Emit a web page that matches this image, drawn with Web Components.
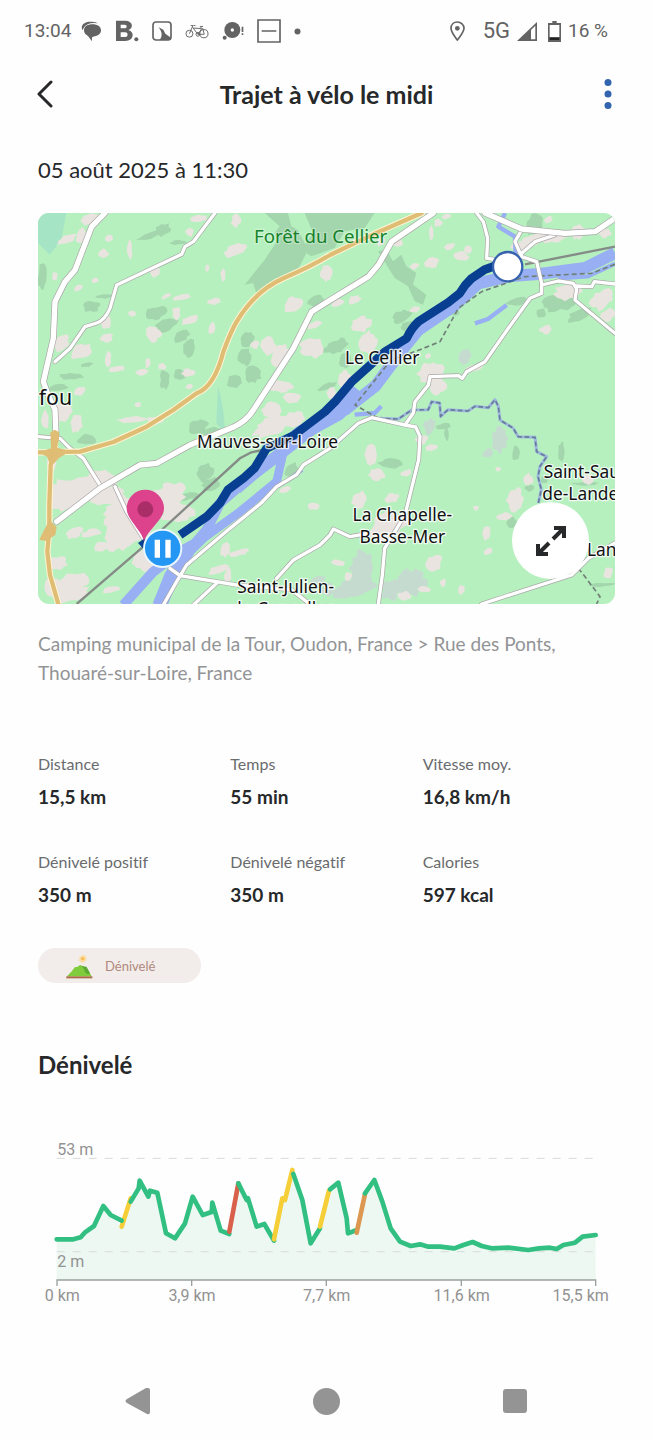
<!DOCTYPE html>
<html lang="fr">
<head>
<meta charset="utf-8">
<meta name="viewport" content="width=device-width, initial-scale=1">
<title>Trajet à vélo le midi</title>
<style>
body { margin: 0; background: #fefefe; color: #26282a; font-family: Lato, "Open Sans", sans-serif; font-variant-ligatures: none; }
</style>
</head>
<body>
<trip-page></trip-page>

<template id="status-bar">
<style>
:host { display: flex; align-items: center; justify-content: space-between; height: 62px; padding: 0 45px 0 24px; color: #636363; font: 19px/24px Roboto, sans-serif; }
div { display: flex; align-items: center; }
svg { display: block; flex: none; }
.net { font-size: 22px; margin-left: 18px; margin-right: 7px; }
.bat { margin: 0 7px 0 11px; }
.icons { gap: 13px; margin-left: 10px; }
</style>
<div><span>13:04</span>
<div class="icons">
<svg width="21" height="22" viewBox="0 0 63 66" fill="#636363"><path d="M4 31C-3 12 14 4 32 5q14 0 18 5Q18 6 8 24z"/><path d="M9 31C9 19 20 13 34 13c16 0 26 7 26 18 0 10-8 16-19 18l-8 3v12L21 48C13 44 9 38 9 31z"/></svg>
<svg width="24" height="24" viewBox="0 0 72 72" fill="#636363"><path fill-rule="evenodd" d="M3 5h27c25 0 26 23 10 28 20 5 17 33-9 33H3zM17 17v11h12c8 0 8-11 0-11zM17 40v14h14c9 0 9-14 0-14z"/><circle cx="64" cy="61" r="6"/></svg>
<svg width="20" height="20" viewBox="0 0 60 60"><rect x="3" y="3" width="54" height="54" rx="9" fill="none" stroke="#636363" stroke-width="5"/><path d="M20 19l14 7 6 12 17 12v7H23c8-11 9-22-3-38z" fill="#636363"/></svg>
<svg width="24" height="17" viewBox="0 0 76 54" fill="none" stroke="#636363" stroke-width="3"><circle cx="14" cy="34" r="11"/><circle cx="60" cy="34" r="13"/><path d="M14 34l11-26h-7m9 0h6m-9 6l17 22 12-18-27-2m26 0l-4-5h9m-1 5l5 20M41 36h19"/><circle cx="41" cy="36" r="6"/></svg>
<svg width="22" height="20" viewBox="0 0 66 60" fill="#636363"><circle cx="31" cy="27" r="24"/><circle cx="31" cy="27" r="5" fill="#fff"/><circle cx="8" cy="50" r="6"/><path d="M59 17h5v16h-5zM59 37h5v5h-5z"/></svg>
<svg width="24" height="24" viewBox="0 0 72 72" fill="none" stroke="#636363" stroke-width="5"><path d="M3 3h66v66H3zM14 36h44"/></svg>
<svg width="7" height="7" viewBox="0 0 14 14" fill="#636363"><circle cx="7" cy="7" r="6"/></svg>
</div></div>
<div>
<svg width="15" height="20" viewBox="0 0 45 60" fill="none" stroke="#636363" stroke-width="5"><path d="M22 57C10 41 3 33 3 22 3 11 11 3 22 3s20 8 20 19c0 11-8 19-20 35z"/><circle cx="22" cy="22" r="7" fill="#636363" stroke="none"/></svg>
<span class="net">5G</span>
<svg width="20" height="19" viewBox="0 0 60 57"><path d="M0 57L60 0v57z" fill="#636363"/><path d="M42 24l13-13v41H42z" fill="#fefefe"/></svg>
<svg class="bat" width="13" height="21" viewBox="0 0 39 63"><path d="M13 0h13v6h13v57H0V6h13z" fill="#636363"/><path d="M5 12h29v36H5z" fill="#fefefe"/><path d="M5 50h29v7H5z" fill="#222"/></svg>
<span>16 %</span></div>
</template>

<template id="app-header">
<style>
:host { display: flex; align-items: center; justify-content: space-between; height: 64px; padding: 0 27px; }
h1 { margin: 0; font-size: 25px; line-height: 32px; font-weight: 700; }
button { width: 36px; height: 44px; padding: 0; border: 0; background: none; display: grid; place-items: center; }
svg { display: block; }
</style>
<button aria-label="Retour"><svg width="16" height="28" viewBox="0 0 16 28" fill="none" stroke="#26282a" stroke-width="3" stroke-linecap="round" stroke-linejoin="round"><path d="M14 2L2 14l12 12"/></svg></button>
<h1><slot></slot></h1>
<button aria-label="Plus d’options"><svg width="8" height="32" viewBox="0 0 16 64" fill="#3265ae"><circle cx="8" cy="9" r="7"/><circle cx="8" cy="32" r="7"/><circle cx="8" cy="55" r="7"/></svg></button>
</template>

<template id="trip-map">
<style>
:host { display: block; position: relative; border-radius: 11px; overflow: hidden; background: #b7f0bf; }
.map { display: block; width: 100%; height: auto; }
button { position: absolute; right: 26px; bottom: 25px; width: 77px; height: 77px; border: 0; border-radius: 50%; background: #fff; padding: 0; display: grid; place-items: center; }
text { font-family: "Noto Sans", "Open Sans", sans-serif; font-size: 52px; fill: #111; stroke: #fff; stroke-opacity: .8; stroke-width: 8; paint-order: stroke; stroke-linejoin: round; }
.fou { font-size: 64px; }
.wood { font-size: 56px; fill: #16822a; stroke-opacity: .3; }
.mid { text-anchor: middle; }
</style>
<svg class="map" viewBox="0 0 1731 1173" role="img" aria-label="Carte du trajet">
<defs>
<g id="roads" fill="none" stroke-linejoin="round" stroke-linecap="round">
<path d="M201 0L161 41 111 171 81 206 51 266 46 376 16 506 30 545 51 590 54 666"/>
<path d="M1186 0L1061 86 1021 156 991 191 861 271 821 296 766 406 646 591Q625 625 585 643L456 696 356 751 306 756 186 826 56 926"/>
<path d="M1341 0L1451 48 1581 61 1671 56 1731 16"/>
</g>
<g id="lanes" fill="none" stroke-linejoin="round" stroke-linecap="round">
<path d="M531 0L466 86 441 101 431 124 236 216 216 286Q200 322 176 330L141 341 96 406 51 446"/>
<path d="M0 671L66 676 96 706 136 736 186 816M231 821L266 896 316 976"/>
<path d="M1316 0L1336 26 1349 76 1346 136 1381 141M1451 121L1491 86 1551 66"/>
<path d="M1451 51L1431 86 1451 131 1496 146 1511 211 1511 241 1476 256 1411 346 1341 446 1286 476 1273 496 1261 488 1176 491 1171 516 1131 566 1126 600 1101 636 1133 642 1146 670 1142 740 1101 906 1040 1006 1033 1086 1021 1173"/>
<path d="M1511 216L1561 204 1606 211 1616 228 1611 261 1731 361M1616 219L1661 221 1669 206 1731 213"/>
<path d="M1101 636L1001 614 961 631 876 706 796 756 776 785 716 821 670 870 576 946 446 1056 416 1106 376 1176"/>
<path d="M396 1066L426 1088 596 1116 760 1130 815 1173M466 1176L536 1111M716 1096L766 1041 846 996 876 966 886 948 936 971 991 961M1331 1173L1601 1086 1651 1036 1731 990"/>
</g>
<g id="motorway" fill="none" stroke-linejoin="round" stroke-linecap="round">
<path d="M1151 0L1010 62 876 126Q820 160 736 196 650 235 596 326 580 352 556 416 530 520 476 541L406 591 326 641 226 687 126 716 0 718M51 666V716L38 756 34 876 34 946 28 1016 36 1086 61 1173"/>
</g>
</defs>
<path d="M0 0H85L70 80 35 125 0 90zM540 520q22 80 20 140l-25-30z" fill="#a5e5c5"/>
<g class="woods" fill="#a3d6ad"></g>
<g class="haze" fill="#c6dbd0"></g>
<g class="towns" fill="#e9e4df"></g>
<path d="M680 0h70l10 40 20 10 30 60-40 80-55 5-60 45-10-30-25 5 60-75 40-60-10-20 15-20zM800 0h210l-30 45-60 10-30 50-70 25-30-20 35-50z" fill="#a3d6ad"/>
<path d="M1020 115l25-5 20 35 25-20 15 35 30 20-10 35 40 30-10 30-25-10-20-45-40-25z" fill="#a3d6ad"/>
<g fill="none" stroke="#98b0f3" stroke-linejoin="round">
<path d="M1731 120L1641 165 1511 182 1411 190 1321 211 1251 276 1141 351 1101 400 1011 520 921 590 826 645 736 715 656 775 596 826" stroke-width="36"/>
<path d="M610 815L546 870 506 950 470 992 426 1016 346 1076 256 1176" stroke-width="30"/>
<path d="M960 530L900 600 790 660 740 700" stroke-width="46"/>
<path d="M736 716L716 806 606 896 496 976 416 1056 356 1176" stroke-width="26"/>
<path d="M450 1010L400 1090 366 1176" stroke-width="44"/>
<path d="M1401 0L1381 41 1431 71 1433 136M1311 331L1350 318 1406 276M1731 152L1650 190 1560 196M950 605l60-5 20-20M752 800l40-30" stroke-width="13"/>
</g>
<path d="M116 1173L316 1001 606 736 640 718 690 708M1461 154L1731 101" fill="none" stroke="#858b86" stroke-width="7"/>
<path d="M1731 154L1661 181 1461 191 1331 236 1261 286 1206 386 1131 416 1060 440 951 576 1021 616M1621 1066L1640 1090 1686 1151 1676 1173" fill="none" stroke="#708078" stroke-width="5" stroke-dasharray="15 9"/>
<path d="M1021 616L1081 618 1121 591 1171 590 1181 566 1205 570 1208 610 1230 590 1290 594 1311 580 1351 584 1371 560 1381 580 1386 621 1425 645 1441 671 1491 673 1496 716 1526 731 1506 760 1500 790 1510 830 1501 870" fill="none" stroke="#9db8dd" stroke-width="9" stroke-linejoin="round"/>
<path d="M1021 616L1081 618 1121 591 1171 590 1181 566 1205 570 1208 610 1230 590 1290 594 1311 580 1351 584 1371 560 1381 580 1386 621 1425 645 1441 671 1491 673 1496 716 1526 731 1506 760 1500 790 1510 830 1501 870" fill="none" stroke="#687b9d" stroke-width="5" stroke-dasharray="14 8"/>
<use href="#lanes" stroke="#aaa5a8" stroke-width="14"/><use href="#lanes" stroke="#fff" stroke-width="10"/>
<use href="#roads" stroke="#aaa5a8" stroke-width="20"/><use href="#roads" stroke="#fff" stroke-width="16"/>
<use href="#motorway" stroke="#fff5d5" stroke-width="19"/><use href="#motorway" stroke="#dfbd74" stroke-width="13"/>
<path d="M51 650l12 8v20l-6 26 40 10-35 22-24 26-10-30-25-14 36-12-2-48zM34 922l22 20-4 24-28 18-20-4 14-28z" fill="#dfbd74"/>
<path d="M1390 152L1340 170 1301 196Q1280 215 1265 241L1231 268 1141 326Q1120 345 1106 376L1041 416 941 506 891 566 861 596 766 668 686 706 650 765 616 796 590 815 570 830 546 870 506 911 426 966" fill="none" stroke="#083f91" stroke-width="26" stroke-linejoin="round"/>
<path d="M300 990l20-14 22 16-14 28z" fill="#083f91"/>
<text class="wood" x="648" y="89">Forêt du Cellier</text>
<text x="921" y="454">Le Cellier</text>
<text class="fou" x="2" y="576">fou</text>
<text x="477" y="705">Mauves-sur-Loire</text>
<text class="mid" x="1093" y="924">La Chapelle-</text>
<text class="mid" x="1093" y="990">Basse-Mer</text>
<text class="mid" x="743" y="1139">Saint-Julien-</text>
<text class="mid" x="743" y="1206">le-Concelles</text>
<text x="1517" y="795">Saint-Sauveur-</text>
<text x="1513" y="861">de-Landemont</text>
<text x="1647" y="1029">Landemont</text>
<circle cx="1409" cy="161" r="44" fill="#fff" stroke="#3763ae" stroke-width="7"/>
<path d="M318 985C310 950 266 920 266 886a56 56 0 0 1 112 0c0 34-48 64-60 99z" fill="#dc438c"/>
<circle cx="322" cy="889" r="24" fill="#a92e68"/>
<circle cx="374" cy="1006" r="56" fill="#2496f3" stroke="#e9f7ff" stroke-width="6"/>
<path d="M350 980h16v54h-16zM382 980h16v54h-16z" fill="#fff"/>
</svg>
<button aria-label="Agrandir la carte"><svg width="32" height="32" viewBox="0 0 32 32" fill="none" stroke="#26282a" stroke-width="4"><path d="M19 3h10v10M29 3L18 14M3 19v10h10M3 29l11-11"/></svg></button>
</template>

<template id="trip-stat">
<style>
:host { display: block; }
dl { margin: 0; display: grid; gap: 9px; }
dt { font-size: 16px; line-height: 24px; color: #696b6d; }
dd { margin: 0; font-size: 19px; line-height: 24px; font-weight: 700; }
</style>
<dl><dt><slot name="label"></slot></dt><dd><slot></slot></dd></dl>
</template>

<template id="trip-chip">
<style>
:host { display: flex; align-items: center; box-sizing: border-box; width: 163px; height: 35px; padding-left: 28px; gap: 12px; border-radius: 18px; background: #f2ecea; color: #b0897c; font-size: 13px; line-height: 20px; }
</style>
<svg width="27" height="26" viewBox="0 0 81 78"><path d="M48 5l3 4 6-4v6l6 2-4 5 4 4-7 2v6l-6-3-5 3-1-6-7-2 5-4-4-5 7-2z" fill="#fbdc9c"/><circle cx="50" cy="17" r="5" fill="#f9bd58"/><path d="M3 70L18 54l8-11 9-2 7-5 10 4 9 2 7 12 9 16z" fill="#81cc3c"/><path d="M46 38l9 3 6 0 7 12 4 8-6 3-8-5-4-10z" fill="#5ca936"/><path d="M1 70h78v6H1z" fill="#a86c43"/></svg>
<slot></slot>
</template>

<template id="elevation-chart">
<style>
:host { display: block; }
svg { display: block; width: 100%; height: auto; }
text { font-family: Roboto, sans-serif; font-size: 48px; fill: #929292; }
.x text { text-anchor: middle; }
</style>
<svg viewBox="-6 0 1731 540" role="img" aria-label="Profil du dénivelé">
<path class="area" fill="#edf8f3"/>
<path d="M50 85H1667M50 365H1667" stroke="#dde2df" stroke-width="4" stroke-dasharray="24 24" fill="none"/>
<g class="lines" fill="none" stroke-width="14" stroke-linejoin="round" stroke-linecap="round"></g>
<path d="M51 468V450H1667V468M455 450v18M859 450v18M1264 450v18" fill="none" stroke="#9aa09d" stroke-width="4"/>
<text x="52" y="75">53 m</text><text x="52" y="411">2 m</text>
<g class="x"><text x="67" y="514">0 km</text><text x="456" y="514">3,9 km</text><text x="860" y="514">7,7 km</text><text x="1265" y="514">11,6 km</text><text x="1622" y="514">15,5 km</text></g>
</svg>
</template>

<template id="system-nav">
<style>
:host { display: flex; justify-content: center; gap: 144px; height: 78px; align-items: center; }
button { width: 44px; height: 44px; padding: 0; border: 0; background: none; display: grid; place-items: center; }
svg { display: block; fill: #949494; }
</style>
<button aria-label="Précédent"><svg width="28" height="28" viewBox="0 0 28 28"><path d="M23 1q2 0 2 2v22q0 3-3 2L2 16q-3-2 0-4L21 1z"/></svg></button>
<button aria-label="Accueil"><svg width="27" height="27" viewBox="0 0 28 28"><circle cx="14" cy="14" r="14"/></svg></button>
<button aria-label="Applications récentes"><svg width="24" height="24" viewBox="0 0 24 24"><rect width="24" height="24" rx="3"/></svg></button>
</template>

<template id="trip-page">
<style>
:host { display: flex; flex-direction: column; min-height: 100vh; }
main { padding: 30px 38px 0; }
.date { margin: 0 0 29px; font-size: 22px; line-height: 28px; }
.route { margin: 25px 0 65px; font-size: 19px; line-height: 29px; color: #929496; }
.stats { display: grid; grid-template-columns: repeat(3, 1fr); row-gap: 41px; margin-bottom: 41px; }
h2 { margin: 66px 0 49px; font-size: 24px; line-height: 32px; font-weight: 700; }
system-nav { margin-top: auto; }
</style>
<status-bar></status-bar>
<app-header>Trajet à vélo le midi</app-header>
<main>
<p class="date">05 août 2025 à 11:30</p>
<trip-map></trip-map>
<p class="route">Camping municipal de la Tour, Oudon, France &gt; Rue des Ponts, Thouaré-sur-Loire, France</p>
<section class="stats">
<trip-stat><span slot="label">Distance</span>15,5 km</trip-stat>
<trip-stat><span slot="label">Temps</span>55 min</trip-stat>
<trip-stat><span slot="label">Vitesse moy.</span>16,8 km/h</trip-stat>
<trip-stat><span slot="label">Dénivelé positif</span>350 m</trip-stat>
<trip-stat><span slot="label">Dénivelé négatif</span>350 m</trip-stat>
<trip-stat><span slot="label">Calories</span>597 kcal</trip-stat>
</section>
<trip-chip>Dénivelé</trip-chip>
<h2>Dénivelé</h2>
<elevation-chart></elevation-chart>
</main>
<system-nav></system-nav>
</template>

<script>
const SVG = 'http://www.w3.org/2000/svg';

class Base extends HTMLElement {
  constructor() {
    super();
    const tpl = document.getElementById(this.localName);
    this.attachShadow({ mode: 'open' }).append(tpl.content.cloneNode(true));
  }
}

// Land cover: x, y (centre), width, height of each irregular patch.
const TOWNS = [
  [85,80,60,26],[130,70,36,50],[155,20,50,36],[213,75,26,22],[196,122,32,28],[275,110,16,60],[120,225,26,22],[50,190,18,30],
  [480,18,60,22],[455,58,26,26],[595,22,30,46],[590,112,70,34],[508,166,12,26],[555,186,16,40],[172,202,22,16],[350,178,36,30],
  [385,250,30,14],[430,254,60,16],[415,300,26,40],[455,322,54,24],[345,362,52,50],[283,302,26,20],[522,345,24,36],[205,330,30,40],
  [205,375,40,26],[130,415,70,46],[70,390,50,50],[210,440,22,50],[235,468,50,20],[310,478,40,20],[372,460,26,22],[330,450,16,30],
  [450,480,40,26],[455,520,24,18],[125,535,34,30],[300,575,18,18],[530,265,44,20],[765,275,56,50],[825,405,80,60],[730,430,60,70],
  [690,400,46,60],[730,520,80,36],[760,555,60,30],[830,335,50,20],[650,395,26,30],[865,180,40,60],[900,270,40,24],[970,335,60,50],
  [990,390,56,70],[950,260,40,26],[1030,85,30,26],[1080,90,34,26],[1180,150,50,32],[1235,100,34,22],[1270,130,44,30],[1290,110,26,24],
  [1200,30,26,26],[1225,10,30,16],[1130,160,30,20],[1130,290,30,20],[1180,480,80,70],[1200,520,60,50],[1310,465,60,20],[1170,430,20,16],
  [1480,85,120,40],[1540,75,90,30],[1620,55,40,50],[1700,60,40,30],[1590,235,90,50],[1690,260,80,60],[1710,305,50,40],[1525,350,40,30],
  [1530,20,26,20],[1180,60,14,50],[920,500,40,60],[880,540,30,40],[700,640,110,60],
  [700,590,60,50],[770,620,60,50],[280,620,90,18],[350,622,50,26],[70,600,60,60],[115,630,40,60],[20,620,24,60],[40,750,30,60],
  [110,830,180,80],[190,800,100,60],[80,870,100,50],[210,850,110,60],[260,890,120,80],[380,860,120,90],[420,900,110,60],[280,940,160,110],
  [240,970,90,90],[330,1040,100,70],[160,960,60,24],[110,960,50,30],[60,1050,60,40],[110,1100,100,40],[100,1140,110,60],[50,1120,60,60],
  [190,1000,40,30],[220,1130,60,20],[395,825,50,36],[600,1020,70,20],[560,1010,30,50],[540,1070,60,24],[570,1090,24,50],[740,830,40,20],
  [825,880,40,24],[1000,725,36,60],[1015,785,50,36],[965,860,50,50],[1060,855,50,30],[1105,780,36,20],[1150,680,40,26],[1180,705,36,22],
  [1050,940,110,90],[1380,768,16,16],[1315,885,20,16],[1430,860,50,70],[1400,910,50,24],[1470,800,30,40],[1345,960,30,40],[1350,1015,26,22],
  [1185,1050,60,50],[1160,1130,40,20],[1100,1150,40,30],[1215,1110,20,26],[1270,1130,20,30],[900,1050,50,20],[930,1090,22,26],
  [1710,1080,30,36],[1650,800,40,30]
];
const WOODS = [
  [345,65,90,18],[375,50,50,40],[420,88,60,14],[160,280,54,36],[200,250,50,12],[12,190,26,80],[355,300,60,46],[385,335,70,46],
  [430,370,50,36],[455,405,40,56],[380,500,30,60],[425,485,40,40],[100,490,80,20],[60,525,60,22],[145,455,40,14],[628,380,40,50],
  [620,430,40,60],[590,505,50,40],[645,485,50,50],[835,265,50,34],[880,410,70,20],[870,520,60,20],[1090,310,60,40],[1115,340,50,30],
  [900,400,60,46],[920,440,40,50],[1490,35,50,70],[1560,270,100,50],[1625,305,70,40],[1440,265,70,24],[1510,300,30,30],[150,680,60,34],
  [480,640,60,46],[520,655,70,24],[500,780,60,60],[520,815,60,40],[450,850,70,24],[760,770,40,40],[1060,752,80,30],[1215,640,50,18],
  [1225,660,14,50],[1435,720,26,46],[1570,715,22,56],[1520,800,24,24],[1420,925,30,40],[1640,812,90,10],[1690,1115,90,12],[1475,825,30,20],
  [1250,300,40,16]
];
const HAZE = [
  [1175,640,40,50],[1385,680,50,80],[1280,430,40,50],[970,1060,70,100],[950,1125,130,60],[1120,1110,90,90],[1060,1130,60,70],
  [840,1100,50,24],[870,1130,40,40],[1350,720,30,30],[820,1010,20,20]
];

// Seeded generator, so that the outlines stay the same on every load.
function outlines(list, seed) {
  let s = seed;
  const rnd = () => (s = (s * 16807) % 2147483647) / 2147483647;
  return list.map(([x, y, w, h]) => {
    const n = 8 + Math.floor((w + h) / 14);
    const tilt = rnd() * 0.8 - 0.7;
    const pts = [];
    for (let i = 0; i < n; i++) {
      const a = i / n * Math.PI * 2, r = 0.36 + rnd() * 0.22;
      const dx = Math.cos(a) * w * r, dy = Math.sin(a) * h * r;
      pts.push(Math.round(x + dx) + ' ' + Math.round(y + dy + dx * tilt * 0.5));
    }
    return 'M' + pts.join('L') + 'z';
  }).join('');
}

class TripMap extends Base {
  connectedCallback() {
    for (const [name, list, seed] of [['woods', WOODS, 77], ['haze', HAZE, 31], ['towns', TOWNS, 1234]]) {
      const p = document.createElementNS(SVG, 'path');
      p.setAttribute('d', outlines(list, seed));
      this.shadowRoot.querySelector('.' + name).replaceChildren(p);
    }
  }
}

const GREEN = '#32bf82', YELLOW = '#f5ce38', RED = '#d9614c', ORANGE = '#dc9850';
const PROFILE = [
  [YELLOW, '245,290 272,205'],
  [GREEN, '50,328 100,328 122,322 134,308 162,288 190,228 212,255 245,272'],
  [GREEN, '272,215 296,175 299,152 325,200 330,182 352,188 378,310 405,325 435,280 458,200 488,255 515,246 517,218 542,302 568,312'],
  [RED, '568,305 595,160'],
  [GREEN, '595,160 620,210 624,205 650,290 673,282 702,332'],
  [YELLOW, '702,328 727,205 735,210 757,120'],
  [GREEN, '760,132 787,210 812,340 840,295'],
  [YELLOW, '840,290 867,182'],
  [GREEN, '870,178 895,158 920,265 924,310 950,300'],
  [ORANGE, '950,308 975,192'],
  [GREEN, '975,190 1003,150 1027,215 1052,295 1080,335 1112,348 1140,343 1165,350 1200,350 1243,355 1270,345 1298,336 1325,348 1355,355 1405,353 1465,360 1497,355 1530,353 1550,357 1570,345 1605,338 1628,320 1667,315']
];
class ElevationChart extends Base {
  connectedCallback() {
    const g = this.shadowRoot.querySelector('.lines');
    g.replaceChildren(...PROFILE.map(([color, points]) => {
      const l = document.createElementNS(SVG, 'polyline');
      l.setAttribute('points', points);
      l.setAttribute('stroke', color);
      return l;
    }));
    const pts = PROFILE.flatMap(p => p[1].split(' ')).sort((a, b) => parseInt(a) - parseInt(b));
    this.shadowRoot.querySelector('.area').setAttribute('d', 'M50 450L' + pts.join(' ') + ' 1667 450z');
  }
}

customElements.define('status-bar', class extends Base {});
customElements.define('app-header', class extends Base {});
customElements.define('trip-map', TripMap);
customElements.define('trip-stat', class extends Base {});
customElements.define('trip-chip', class extends Base {});
customElements.define('elevation-chart', ElevationChart);
customElements.define('system-nav', class extends Base {});
customElements.define('trip-page', class extends Base {});
</script>
</body>
</html>
